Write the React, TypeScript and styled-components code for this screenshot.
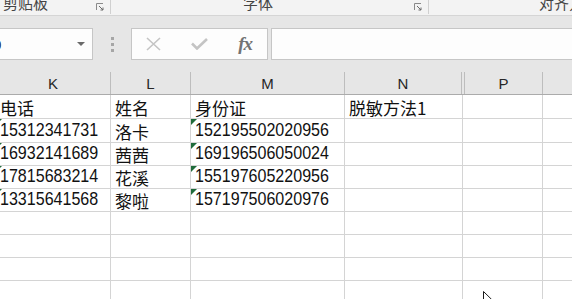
import React from 'react'
import styled, { createGlobalStyle } from 'styled-components';

const GlobalStyle = createGlobalStyle`
    html, body {
        margin: 0;
        padding: 0;
        background: #ffffff;
        overflow: hidden;
    }
    #root {
        width: 572px;
        height: 299px;
        position: relative;
        overflow: hidden;
    }
`;

type Row = { k: string; l: string; m: string; n: string; flag?: boolean };

const rows: Row[] = [
    { k: '电话', l: '姓名', m: '身份证', n: '脱敏方法1' },
    { k: '15312341731', l: '洛卡', m: '152195502020956', n: '', flag: true },
    { k: '16932141689', l: '茜茜', m: '169196506050024', n: '', flag: true },
    { k: '17815683214', l: '花溪', m: '155197605220956', n: '', flag: true },
    { k: '13315641568', l: '黎啦', m: '157197506020976', n: '', flag: true },
    { k: '', l: '', m: '', n: '' },
    { k: '', l: '', m: '', n: '' },
    { k: '', l: '', m: '', n: '' },
    { k: '', l: '', m: '', n: '' },
];

const rowHeights = [24, 24, 23, 23, 23, 23, 23, 23, 23];

const Launcher = () => (
    <svg width="8" height="8" viewBox="0 0 8 8">
        <path d="M0.5 7 V0.5 H7" stroke="#8a8a8a" strokeWidth="1" fill="none" />
        <path d="M3 3 L7 7 M7 4.5 V7 H4.5" stroke="#6a6a6a" strokeWidth="1" fill="none" />
    </svg>
);

const Pointer = () => (
    <svg width="10" height="14" viewBox="0 0 10 14">
        <path d="M0.5 0.5 V12 L3.3 9.3 L5.3 13.5 L7 12.7 L5 8.6 H8.8 Z" fill="#ffffff" stroke="#1a1a1a" strokeWidth="1" />
    </svg>
);

const isNum = (s: string) => /^[0-9]+$/.test(s);

const CellText = ({ value }: { value: string }) =>
    isNum(value) ? <NumText>{value}</NumText> : <CjkText>{value}</CjkText>;

export default function App() {
    return (
        <Page>
            <GlobalStyle />
            <Ribbon>
                <Group $width={111} $left={3}>
                    <GroupLabel>剪贴板</GroupLabel>
                    <LauncherSlot><Launcher /></LauncherSlot>
                </Group>
                <Group $width={318} $left={132}>
                    <GroupLabel>字体</GroupLabel>
                    <LauncherSlot><Launcher /></LauncherSlot>
                </Group>
                <Group $width={200} $left={110} $last>
                    <GroupLabel>对齐方式</GroupLabel>
                </Group>
            </Ribbon>
            <FormulaBar>
                <NameBox>
                    <NameText>0</NameText>
                    <DropArrow />
                </NameBox>
                <Grip>
                    <Dot /><Dot /><Dot />
                </Grip>
                <FxBox>
                    <svg width="15" height="14" viewBox="0 0 15 14">
                        <path d="M1 1 L14 13 M14 1 L1 13" stroke="#c4c4c4" strokeWidth="1.6" fill="none" />
                    </svg>
                    <svg width="17" height="12" viewBox="0 0 17 12">
                        <path d="M1 5.5 L6 10.5 L16 1" stroke="#c4c4c4" strokeWidth="2.6" fill="none" />
                    </svg>
                    <FxText>fx</FxText>
                </FxBox>
                <FormulaInput />
            </FormulaBar>
            <Sheet>
                <HeaderRow>
                    <HeaderCell>K</HeaderCell>
                    <HeaderCell>L</HeaderCell>
                    <HeaderCell>M</HeaderCell>
                    <HeaderCell>N</HeaderCell>
                    <HeaderCell />
                    <HeaderCell>P</HeaderCell>
                    <HeaderCell />
                </HeaderRow>
                {rows.map((r, i) => (
                    <BodyRow key={i} $height={rowHeights[i]}>
                        <Cell $flag={r.flag}><CellText value={r.k} /></Cell>
                        <Cell><CellText value={r.l} /></Cell>
                        <Cell $flag={r.flag}><CellText value={r.m} /></Cell>
                        <Cell><CellText value={r.n} /></Cell>
                        <Cell />
                        <Cell />
                    </BodyRow>
                ))}
            </Sheet>
            <Cursor><Pointer /></Cursor>
        </Page>
    )
}

const Page = styled.div`
    width: 572px;
    height: 299px;
    position: relative;
    overflow: hidden;
    font-family: "Noto Sans CJK SC", "Liberation Sans", sans-serif;
`;

const Ribbon = styled.div`
    display: flex;
    height: 15px;
    background: #f3f3f3;
    border-bottom: 1px solid #d5d5d5;
    overflow: hidden;
`;

const Group = styled.div<{ $width: number; $left: number; $last?: boolean }>`
    flex: 0 0 ${({ $width }) => $width}px;
    box-sizing: border-box;
    display: flex;
    align-items: flex-start;
    padding-left: ${({ $left }) => $left}px;
    padding-right: 6px;
    border-right: ${({ $last }) => $last ? 'none' : '1px solid #d0d0d0'};
    height: 14px;
`;

const GroupLabel = styled.span`
    font-size: 15px;
    line-height: 15px;
    margin-top: -5px;
    color: #444444;
    white-space: nowrap;
`;

const LauncherSlot = styled.span`
    margin-left: auto;
    margin-top: 3px;
    display: flex;
`;

const FormulaBar = styled.div`
    display: flex;
    align-items: flex-start;
    height: 56px;
    padding-top: 12px;
    box-sizing: border-box;
    background: #e6e6e6;
`;

const NameBox = styled.div`
    flex: 0 0 97px;
    margin-left: -4px;
    height: 32px;
    box-sizing: border-box;
    background: #fdfdfd;
    border: 1px solid #c6c6c6;
    display: flex;
    align-items: center;
    padding-right: 7px;
`;

const NameText = styled.span`
    font-family: "Liberation Sans", sans-serif;
    font-size: 15px;
    color: #222222;
    margin-left: -4px;
`;

const DropArrow = styled.span`
    margin-left: auto;
    width: 0;
    height: 0;
    border-left: 4px solid transparent;
    border-right: 4px solid transparent;
    border-top: 4px solid #6a6a6a;
`;

const Grip = styled.div`
    flex: 0 0 38px;
    display: flex;
    flex-direction: column;
    align-items: center;
    gap: 3px;
    padding-top: 9px;
    box-sizing: border-box;
    height: 32px;
`;

const Dot = styled.span`
    width: 3px;
    height: 3px;
    background: #a6a6a6;
`;

const FxBox = styled.div`
    flex: 0 0 137px;
    height: 32px;
    box-sizing: border-box;
    background: #fdfdfd;
    border: 1px solid #c6c6c6;
    display: flex;
    align-items: center;
    justify-content: space-between;
    padding: 0 15px 0 14px;
    margin-right: 3px;
`;

const FxText = styled.span`
    font-family: "Liberation Serif", serif;
    font-style: italic;
    font-weight: bold;
    font-size: 19px;
    color: #737373;
    letter-spacing: -1px;
`;

const FormulaInput = styled.div`
    flex: 1;
    height: 32px;
    box-sizing: border-box;
    background: #fdfdfd;
    border: 1px solid #c6c6c6;
    border-right: none;
`;

const Sheet = styled.div`
    background: #e6e6e6;
`;

const HeaderRow = styled.div`
    display: grid;
    grid-template-columns: 115px 80px 154px 117px 3px 78px 1fr;
    margin-left: -4px;
    height: 23px;
    box-sizing: border-box;
    border-bottom: 1px solid #ababab;
    background: #e6e6e6;
`;

const HeaderCell = styled.div`
    border-right: 1px solid #bdbdbd;
    display: flex;
    align-items: center;
    justify-content: center;
    font-family: "Liberation Sans", sans-serif;
    font-size: 15px;
    color: #262626;
    padding-top: 1px;
    &:last-child { border-right: none; }
`;

const BodyRow = styled.div<{ $height: number }>`
    display: grid;
    grid-template-columns: 115px 80px 154px 118px 80px 1fr;
    margin-left: -4px;
    height: ${({ $height }) => $height}px;
    box-sizing: border-box;
    border-bottom: 1px solid #d4d4d4;
    background: #ffffff;
`;

const Cell = styled.div<{ $flag?: boolean }>`
    position: relative;
    border-right: 1px solid #d4d4d4;
    display: flex;
    align-items: flex-end;
    padding-left: 4px;
    white-space: nowrap;
    overflow: hidden;
    line-height: 1;
    color: #111111;
    &::before {
        content: '';
        display: ${({ $flag }) => $flag ? 'block' : 'none'};
        position: absolute;
        left: 0;
        top: 0;
        width: 0;
        height: 0;
        border-top: 6px solid #1f6b3a;
        border-right: 6px solid transparent;
    }
    &:last-child { border-right: none; }
`;

const NumText = styled.span`
    display: inline-block;
    font-family: "Liberation Sans", sans-serif;
    font-size: 19px;
    padding-bottom: 3px;
    transform: scaleX(0.845);
    transform-origin: left bottom;
`;

const CjkText = styled.span`
    font-family: "Noto Sans CJK SC", sans-serif;
    font-size: 17px;
    padding-bottom: 2px;
`;

const Cursor = styled.div`
    position: absolute;
    left: 483px;
    top: 291px;
    display: flex;
`;
